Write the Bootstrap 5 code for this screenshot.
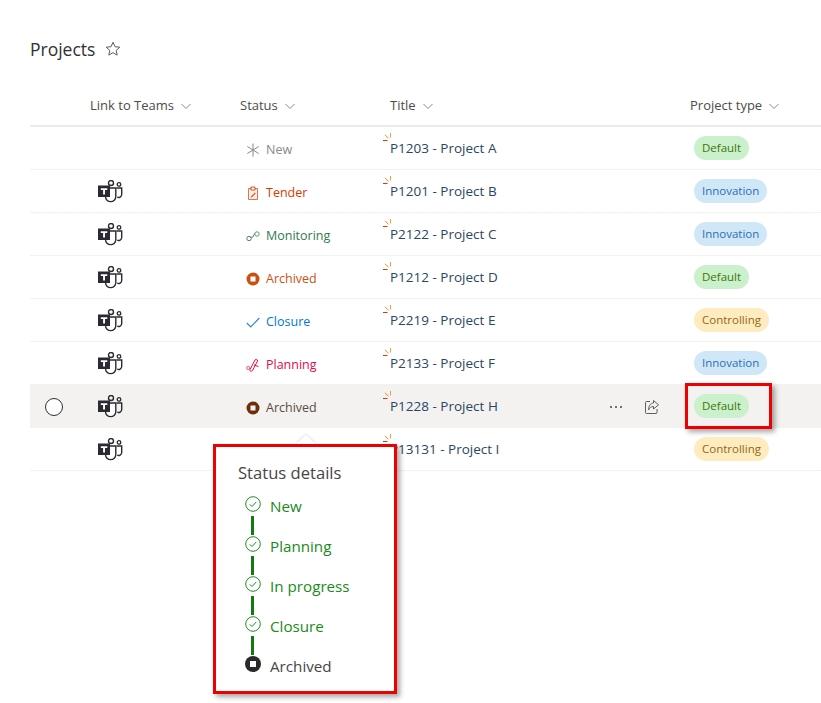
<!DOCTYPE html>
<html lang="en">
<head>
<meta charset="utf-8">
<title>Projects</title>
<link href="https://cdn.jsdelivr.net/npm/bootstrap@5.3.0/dist/css/bootstrap.min.css" rel="stylesheet">
<style>
html,body{height:100%;overflow:hidden;background:#fff}
body{font-family:"Open Sans","Noto Sans",sans-serif;font-size:12.5px;color:#323130;position:relative}
.page-wrap{padding:37px 0 0 30px}
.page-name{font-size:17.5px;line-height:24px;color:#323130;font-weight:400;margin:0}
.star-ico{width:16px;height:16px;margin-left:10px}
.list-view{margin-top:23px}
.list-grid{display:grid;grid-template-columns:60px 150px 150px 300px 1fr;align-items:center;height:43px;border-bottom:1px solid #f3f2f1;padding-top:1px}
.list-head{border-bottom:2px solid #edebe9;height:43px;color:#4d4b49;font-weight:500;font-size:13px;padding-top:2px}
.chev{width:12px;height:12px;margin-left:6px}
.st-cell{padding-left:6px;display:flex;align-items:center;gap:6px;padding-top:3px}
.st-ico{width:14px;height:14px;flex:none}
.teams-ico{width:26px;height:23px;margin-left:7px;display:block}
.s-new{color:#8a8886}.s-tender{color:#d83b01}.s-mon{color:#2f7a4f}.s-arch{color:#ca5010}.s-clos{color:#0078d4}.s-plan{color:#e3084f}.s-archh{color:#5b4a40}
.title-cell{display:flex;align-items:center;position:relative;padding-right:30px;height:100%;font-size:13.5px}
.doc-link{color:#2a4663;text-decoration:none;position:relative}
.glim{position:absolute;left:-7px;top:-5px;width:9px;height:9px}
.row-hover{background:#f3f2f1}
.radio-cell{padding-right:12px}
.row-acts{margin-left:auto;gap:20px;color:#484644}
.pill{display:block;width:fit-content;height:24px;line-height:24px;border-radius:12px;padding:0 8px;font-size:11.5px;margin-left:4px;margin-bottom:1px}
.p-def{background:#caf0cc;color:#437406}
.p-inn{background:#d0e7f8;color:#2b6fb3}
.p-con{background:#ffebc0;color:#8f6a10}
.redbox{position:absolute;border:3px solid #ee0000;box-shadow:3px 3px 5px rgba(0,0,0,.35);pointer-events:none}
.redbox-type{left:685px;top:383px;width:87px;height:46px}
.status-pop{left:213px;top:444px;width:184px;height:250px;background:#fff;padding:15px 0 0 22px;pointer-events:auto}
.pop-tail{position:absolute;left:80px;top:-12px;width:0;height:0;border-left:10px solid transparent;border-right:10px solid transparent;border-bottom:9px solid #fff;filter:drop-shadow(0 -1px 1px rgba(0,0,0,.12))}
.pop-title{font-size:16.6px;line-height:22px;color:#484644;font-weight:400;margin:0 0 12px}
.stp{display:flex;height:40px;gap:9px;color:#1a8a1a;font-size:15.2px;line-height:20px}
.stp-rail{width:16px;margin-left:7px;display:flex;flex-direction:column;align-items:center;flex:none}
.stp-rail svg{width:16px;height:16px;display:block}
.stp-line{width:3px;height:19px;background:#107c10;margin-top:4px;margin-right:1px}
.stp-done{color:#484644}
</style>
</head>
<body>
<svg width="0" height="0" class="d-none">
  <symbol id="teams" viewBox="0 0 26 23">
    <circle cx="14" cy="3" r="2.500" fill="none" stroke="#2b2a33" stroke-width="1.400"/>
    <circle cx="22" cy="4.400" r="1.800" fill="none" stroke="#2b2a33" stroke-width="1.300"/>
    <path d="M19.500 8h5.200v6.500a3 3 0 0 1-4.500 2.500" fill="none" stroke="#2b2a33" stroke-width="1.400"/>
    <path d="M8.500 8h10.300v8.500a5.100 5.100 0 0 1-10.300 0z" fill="#fff" stroke="#2b2a33" stroke-width="1.400"/>
    <rect x="1" y="5.500" width="12" height="11.500" fill="#2b2a33"/>
    <path d="M3.800 8.200h6.500v1.700H8V14.500H6.100V9.900H3.800z" fill="#fff"/>
  </symbol>
  <symbol id="chev" viewBox="0 0 12 12"><path d="M1.500 4l4.500 4.500L10.500 4" fill="none" stroke="#8a8886" stroke-width="1"/></symbol>
  <symbol id="i-new" viewBox="0 0 14 14"><path d="M7 .5v13M1.300 3.500l11.400 7M12.700 3.500l-11.400 7" stroke="#8a8886" stroke-width="1" fill="none"/></symbol>
  <symbol id="i-tender" viewBox="0 0 14 14"><path d="M2.500 2.500h9v11h-9z" fill="#fdf0e9" stroke="#e0653a" stroke-width=".9"/><path d="M5 1h4v3H5z" fill="#fff" stroke="#d83b01" stroke-width=".9"/><path d="M4.800 10.500l4-4 1 1-4 4h-1z" fill="#e0653a"/></symbol>
  <symbol id="i-mon" viewBox="0 0 14 14"><circle cx="3" cy="9.500" r="2.200" fill="none" stroke="#5e7a70"/><circle cx="11" cy="5" r="2.200" fill="none" stroke="#5e9a70"/><path d="M4.500 8c1 1 2.500 .5 2.800-1s1.200-2 1.700-2" fill="none" stroke="#5e6a60"/></symbol>
  <symbol id="i-arch" viewBox="0 0 14 14"><circle cx="7" cy="7" r="6.500" fill="#ca5010"/><rect x="4.500" y="4.500" width="5" height="5" fill="#fff"/></symbol>
  <symbol id="i-archh" viewBox="0 0 14 14"><circle cx="7" cy="7" r="6.500" fill="#6b2f0c"/><rect x="4.500" y="4.500" width="5" height="5" fill="#f3f2f1"/></symbol>
  <symbol id="i-clos" viewBox="0 0 14 14"><path d="M.8 8l4 4 8.500-9" fill="none" stroke="#2b88d8" stroke-width="1.100"/></symbol>
  <symbol id="i-plan" viewBox="0 0 14 14"><path d="M4 11.500l5-9.500c.8-1.300 3-.5 2.500 1l-5 9.500C5.500 14 3 13 4 11.500z" fill="none" stroke="#e3084f"/><circle cx="2.200" cy="10" r="1.600" fill="none" stroke="#ea5a6f"/><path d="M8 7l4.500 1.500" stroke="#e3084f" fill="none"/></symbol>
  <symbol id="glim" viewBox="0 0 9 9"><path d="M0 7.500h4.500" stroke="#d83b01" fill="none"/><path d="M2 1.800l3.500 3.500" stroke="#e8823a" fill="none"/><path d="M7.500 0v4.500" stroke="#f0a030" fill="none"/></symbol>
  <symbol id="chk" viewBox="0 0 16 16"><circle cx="8" cy="8" r="7.300" fill="#fff" stroke="#107c10" stroke-width=".9"/><path d="M4.800 8.300l2.200 2.200 4.200-4.500" fill="none" stroke="#107c10" stroke-width=".9"/></symbol>
</svg>

<main class="page-wrap">
  <div class="d-flex align-items-center">
    <h1 class="page-name">Projects</h1>
    <svg class="star-ico" viewBox="0 0 16 16"><path d="M8 1.300l2 4.400 4.800.5-3.600 3.200 1 4.700L8 11.700l-4.200 2.400 1-4.700L1.200 6.200 6 5.700z" fill="none" stroke="#605e5c" stroke-width="1"/></svg>
  </div>

  <div class="list-view">
    <div class="list-grid list-head">
      <div></div>
      <div class="d-flex align-items-center">Link to Teams<svg class="chev"><use href="#chev"/></svg></div>
      <div class="d-flex align-items-center">Status<svg class="chev"><use href="#chev"/></svg></div>
      <div class="d-flex align-items-center">Title<svg class="chev"><use href="#chev"/></svg></div>
      <div class="d-flex align-items-center">Project type<svg class="chev"><use href="#chev"/></svg></div>
    </div>

    <div class="list-grid">
      <div></div><div></div>
      <div class="st-cell s-new"><svg class="st-ico"><use href="#i-new"/></svg>New</div>
      <div class="title-cell"><a class="doc-link" href="#"><svg class="glim"><use href="#glim"/></svg>P1203 - Project A</a></div>
      <div><span class="pill p-def">Default</span></div>
    </div>
    <div class="list-grid">
      <div></div><div><svg class="teams-ico"><use href="#teams"/></svg></div>
      <div class="st-cell s-tender"><svg class="st-ico"><use href="#i-tender"/></svg>Tender</div>
      <div class="title-cell"><a class="doc-link" href="#"><svg class="glim"><use href="#glim"/></svg>P1201 - Project B</a></div>
      <div><span class="pill p-inn">Innovation</span></div>
    </div>
    <div class="list-grid">
      <div></div><div><svg class="teams-ico"><use href="#teams"/></svg></div>
      <div class="st-cell s-mon"><svg class="st-ico"><use href="#i-mon"/></svg>Monitoring</div>
      <div class="title-cell"><a class="doc-link" href="#"><svg class="glim"><use href="#glim"/></svg>P2122 - Project C</a></div>
      <div><span class="pill p-inn">Innovation</span></div>
    </div>
    <div class="list-grid">
      <div></div><div><svg class="teams-ico"><use href="#teams"/></svg></div>
      <div class="st-cell s-arch"><svg class="st-ico"><use href="#i-arch"/></svg>Archived</div>
      <div class="title-cell"><a class="doc-link" href="#"><svg class="glim"><use href="#glim"/></svg>P1212 - Project D</a></div>
      <div><span class="pill p-def">Default</span></div>
    </div>
    <div class="list-grid">
      <div></div><div><svg class="teams-ico"><use href="#teams"/></svg></div>
      <div class="st-cell s-clos"><svg class="st-ico"><use href="#i-clos"/></svg>Closure</div>
      <div class="title-cell"><a class="doc-link" href="#"><svg class="glim"><use href="#glim"/></svg>P2219 - Project E</a></div>
      <div><span class="pill p-con">Controlling</span></div>
    </div>
    <div class="list-grid">
      <div></div><div><svg class="teams-ico"><use href="#teams"/></svg></div>
      <div class="st-cell s-plan"><svg class="st-ico"><use href="#i-plan"/></svg>Planning</div>
      <div class="title-cell"><a class="doc-link" href="#"><svg class="glim"><use href="#glim"/></svg>P2133 - Project F</a></div>
      <div><span class="pill p-inn">Innovation</span></div>
    </div>
    <div class="list-grid row-hover">
      <div class="d-flex justify-content-center radio-cell"><svg width="20" height="20" viewBox="0 0 20 20"><circle cx="10" cy="10" r="8.500" fill="#fff" stroke="#323130" stroke-width="1"/></svg></div>
      <div><svg class="teams-ico"><use href="#teams"/></svg></div>
      <div class="st-cell s-archh"><svg class="st-ico"><use href="#i-archh"/></svg>Archived</div>
      <div class="title-cell"><a class="doc-link" href="#"><svg class="glim"><use href="#glim"/></svg>P1228 - Project H</a>
        <div class="row-acts d-flex align-items-center">
          <svg width="16" height="16" viewBox="0 0 16 16"><circle cx="3" cy="8" r="1" fill="#484644"/><circle cx="8" cy="8" r="1" fill="#484644"/><circle cx="13" cy="8" r="1" fill="#484644"/></svg>
          <svg width="16" height="16" viewBox="0 0 16 16"><path d="M6 2.500H2.500a1 1 0 0 0-1 1v10a1 1 0 0 0 1 1h9.500a1 1 0 0 0 1-1V10" fill="none" stroke="#605e5c"/><path d="M9.500 1.500l5 4.300-5 4.200V7.500C7 7.500 5.500 9 4.500 11c0-4 2-6.700 5-7z" fill="none" stroke="#605e5c"/></svg>
        </div>
      </div>
      <div><span class="pill p-def">Default</span></div>
    </div>
    <div class="list-grid">
      <div></div><div><svg class="teams-ico"><use href="#teams"/></svg></div>
      <div class="st-cell s-tender"><svg class="st-ico"><use href="#i-tender"/></svg>Tender</div>
      <div class="title-cell"><a class="doc-link" href="#"><svg class="glim"><use href="#glim"/></svg>P13131 - Project I</a></div>
      <div><span class="pill p-con">Controlling</span></div>
    </div>
  </div>
</main>

<div class="redbox redbox-type"></div>

<aside class="redbox status-pop">
  <div class="pop-tail"></div>
  <h2 class="pop-title">Status details</h2>
  <div class="stp"><div class="stp-rail"><svg><use href="#chk"/></svg><div class="stp-line"></div></div><div>New</div></div>
  <div class="stp"><div class="stp-rail"><svg><use href="#chk"/></svg><div class="stp-line"></div></div><div>Planning</div></div>
  <div class="stp"><div class="stp-rail"><svg><use href="#chk"/></svg><div class="stp-line"></div></div><div>In progress</div></div>
  <div class="stp"><div class="stp-rail"><svg><use href="#chk"/></svg><div class="stp-line"></div></div><div>Closure</div></div>
  <div class="stp stp-done"><div class="stp-rail"><svg viewBox="0 0 16 16"><circle cx="8" cy="8" r="8" fill="#2b2a29"/><rect x="5" y="5" width="6" height="6" fill="#fff"/></svg></div><div>Archived</div></div>
</aside>
</body>
</html>
